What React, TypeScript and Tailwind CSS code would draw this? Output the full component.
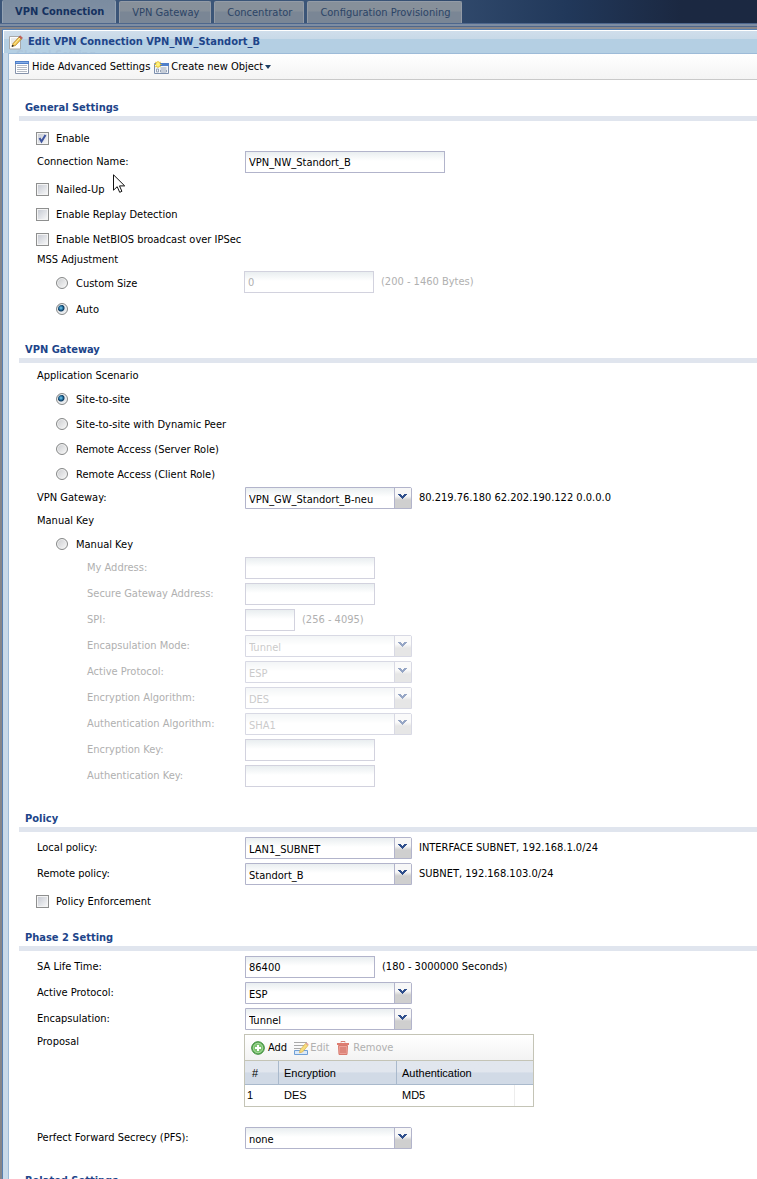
import { useId, type ReactNode } from "react";

const tabs = ["VPN Gateway", "Concentrator", "Configuration Provisioning"];

const scenarios = [
  "Site-to-site",
  "Site-to-site with Dynamic Peer",
  "Remote Access (Server Role)",
  "Remote Access (Client Role)",
];

function NoteIcon() {
  return (
    <svg width="14" height="15" viewBox="0 0 14 15" aria-hidden="true">
      <path d="M.5 1.500h11v12.500H.5z" fill="#fdfdfd" stroke="#a9a9a9" />
      <path d="M2 4h6M2 6h4M2 8h3" stroke="#d8d8d8" />
      <path d="M4 8.500L10 2l2.500 2-6 6.500L3 11.500z" fill="#f3c64b" stroke="#a97b2a" strokeWidth=".7" />
      <path d="M10 2l1-1.200 2.500 2L12.500 4z" fill="#d2605a" stroke="#9b4a42" strokeWidth=".5" />
      <path d="M5 9.500L11 3" stroke="#fff0a8" />
      <path d="M3 11.500l.5-1.500 1 1z" fill="#222" stroke="#222" strokeWidth=".6" />
    </svg>
  );
}

function ListIcon() {
  return (
    <svg width="14" height="13" viewBox="0 0 14 13" aria-hidden="true">
      <path d="M.5.5h13v12H.5z" fill="#fff" stroke="#8693ab" />
      <path d="M0 0h14v3H0z" fill="#4f7fca" />
      <path d="M1 1.500h12" stroke="#86aee6" />
      <path d="M2 4.500h10M2 6.500h10M2 8.500h10M2 10.500h10" stroke="#b4bac4" />
    </svg>
  );
}

function NewObjectIcon() {
  return (
    <svg width="15" height="13" viewBox="0 0 15 13" aria-hidden="true">
      <path d="M.5 2.500h14v10H.5z" fill="#f4f7fb" stroke="#7c8fae" />
      <path d="M6 2h9v3H6z" fill="#4f7fca" />
      <path d="M2.500 8h2v3h-2zM6.500 7h6M6.500 9h6v2h-6z" fill="none" stroke="#97a3b5" />
      <path d="M4 0v7M.5 3.500h7M1.500 1l5 5M6.500 1l-5 5" stroke="#e8c022" strokeWidth="1.200" />
      <circle cx="4" cy="3.500" r="2" fill="#fff27a" />
    </svg>
  );
}

function AddIcon() {
  return (
    <svg width="14" height="14" viewBox="0 0 14 14" aria-hidden="true">
      <circle cx="7" cy="7" r="6.300" fill="#58ab50" stroke="#3d8b3b" />
      <circle cx="7" cy="7" r="4.800" fill="#7cc46f" stroke="#b9e0b1" strokeWidth=".8" />
      <path d="M7 4v6M4 7h6" stroke="#fff" strokeWidth="2" />
    </svg>
  );
}

function EditIcon() {
  return (
    <svg width="15" height="14" viewBox="0 0 15 14" aria-hidden="true">
      <path d="M0 1.500h13M0 4.500h11M0 7.500h7" stroke="#a9a9a9" />
      <path d="M.5 9.500h13v4H.5z" fill="#dbe9f8" stroke="#6f9fd6" />
      <path d="M6 9l5.500-6.500 2.500 2L8.500 11l-3 .8z" fill="#f6dc7d" stroke="#d5ad4c" strokeWidth=".7" />
      <path d="M11.500 2.500l1-1 2.200 1.800-.7 1.200z" fill="#e6a39a" />
    </svg>
  );
}

function TrashIcon() {
  return (
    <svg width="12" height="14" viewBox="0 0 12 14" aria-hidden="true">
      <path d="M4 1.500V.5h4v1" fill="none" stroke="#d98276" />
      <path d="M0 2h12v2H0z" fill="#de7d71" />
      <path d="M1.500 4.500h9l-.5 9H2z" fill="#eda097" stroke="#d77a6e" />
      <path d="M4 6v6M6 6v6M8 6v6" stroke="#cd6d61" />
    </svg>
  );
}

function Pointer() {
  return (
    <svg width="13" height="20" viewBox="0 0 13 20" aria-hidden="true">
      <path
        d="M.5.8v15.400l3.700-3.500 2.500 5.600 2.200-1-2.400-5.400h5.200z"
        fill="#fff"
        stroke="#111"
        strokeWidth="1"
      />
    </svg>
  );
}

function Section({ title, children }: { title: string; children?: ReactNode }) {
  return (
    <section>
      <h2 className="border-b-[5px] border-[#e0e5ee] pt-0.5 pl-1.5 font-bold leading-4 text-[#204489]">
        {title}
      </h2>
      <div className="pt-[5px]">{children}</div>
    </section>
  );
}

function Caption({ children }: { children: ReactNode }) {
  return <p className="h-[19px] pl-[18px] leading-[15px]">{children}</p>;
}

function Check({ label, checked = false }: { label: string; checked?: boolean }) {
  return (
    <label className="flex h-[25px] items-center gap-[7px] pl-[17px]">
      <span className="grid size-[13px]">
        <input
          type="checkbox"
          defaultChecked={checked}
          className="peer col-start-1 row-start-1 size-[13px] appearance-none border border-[#8e8f8f] bg-linear-to-br from-[#c3c7d0] to-[#fbfbfb] shadow-[inset_0_0_0_1px_#f4f4f4]"
        />
        <svg
          viewBox="0 0 13 13"
          className="pointer-events-none invisible col-start-1 row-start-1 peer-checked:visible"
          aria-hidden="true"
        >
          <path d="M3.500 6l2 3.500 4-6.500" fill="none" stroke="#3f559f" strokeWidth="2" />
        </svg>
      </span>
      {label}
    </label>
  );
}

function Radio({ label, name, checked = false }: { label: string; name: string; checked?: boolean }) {
  return (
    <label className="flex h-[25px] items-center gap-2 pl-[37px]">
      <input
        type="radio"
        name={name}
        defaultChecked={checked}
        className="mb-px size-3 appearance-none rounded-full border border-[#868888] bg-linear-to-br from-[#c9cbce] to-[#fafafa] shadow-[inset_0_0_0_1px_#f1f1f1] checked:bg-[radial-gradient(circle_at_4px_4px,#7fd0f0_0,#1c6a9c_2px,#123a5c_3px,#e6eaee_4px)]"
      />
      {label}
    </label>
  );
}

type FieldProps = {
  label: string;
  value?: string;
  hint?: string;
  disabled?: boolean;
};

const inputClass =
  "h-[22px] border border-[#b2b4cb] bg-white bg-linear-to-b from-[#e9eef0] to-white to-[9px] px-[3px] pt-px disabled:border-[#d2d2de] disabled:text-[#b0b0b0]";

function TextField({ label, value = "", hint, disabled, width = "w-[130px]" }: FieldProps & { width?: string }) {
  const id = useId();
  return (
    <div className={`flex h-[26px] items-start leading-[22px] ${disabled ? "text-[#b0b0b0]" : ""}`}>
      <label htmlFor={id} className={`w-[226px] shrink-0 ${disabled ? "pl-[68px]" : "pl-[18px]"}`}>
        {label}
      </label>
      <input id={id} type="text" defaultValue={value} disabled={disabled} className={`${inputClass} ${width}`} />
      {hint && <span className="pl-[7px]">{hint}</span>}
    </div>
  );
}

function Combo({ label, value, hint, disabled }: FieldProps) {
  const id = useId();
  return (
    <div className={`flex h-[26px] items-start leading-[22px] ${disabled ? "text-[#b0b0b0]" : ""}`}>
      <label htmlFor={id} className={`w-[226px] shrink-0 ${disabled ? "pl-[68px]" : "pl-[18px]"}`}>
        {label}
      </label>
      <span className={`relative h-[22px] w-[167px] shrink-0 ${disabled ? "text-[#979797] opacity-50" : ""}`}>
        <select
          id={id}
          disabled={disabled}
          className="h-[22px] w-full appearance-none rounded-tr-xs border border-[#b2b4cb] bg-white bg-linear-to-b from-[#e9eef0] to-white to-[9px] pl-[3px] pt-px opacity-100"
        >
          <option>{value}</option>
        </select>
        <span className="pointer-events-none absolute inset-y-px right-px flex w-[17px] border-l border-[#b2b4cb] bg-linear-to-b from-[#f7f7f7] from-40% to-[#cfcfcf] to-60% pt-[6px] pl-[3px]">
          <svg width="9" height="6" viewBox="0 0 9 6" shapeRendering="crispEdges" aria-hidden="true">
            <path
              d="M0 0h3v1H0zM6 0h3v1H6zM1 1h3v1H1zM5 1h3v1H5zM2 2h5v1H2zM3 3h3v1H3zM4 4h1v1H4z"
              fill="#2f4f8c"
            />
          </svg>
        </span>
      </span>
      {hint && <span className="pl-[7px]">{hint}</span>}
    </div>
  );
}

function ProposalGrid() {
  return (
    <div className="w-[290px] border border-[#c4c4b6] bg-white">
      <div className="flex h-[26px] items-center border-b border-[#c4c4b6] bg-linear-to-b from-white to-[#f3f3f3] pt-px pl-1.5 text-[#b0b0b0]">
        <button type="button" className="flex items-center gap-[3px] text-black">
          <AddIcon />
          Add
        </button>
        <button type="button" disabled className="ml-[7px] flex items-center gap-px">
          <EditIcon />
          Edit
        </button>
        <button type="button" disabled className="ml-2 flex items-center gap-1">
          <TrashIcon />
          Remove
        </button>
      </div>
      <table className="w-full table-fixed border-separate border-spacing-0 text-left font-['Liberation_Sans',sans-serif]">
        <colgroup>
          <col className="w-[34px]" />
          <col className="w-[118px]" />
          <col className="w-[118px]" />
          <col />
        </colgroup>
        <thead>
          <tr className="h-6 bg-linear-to-b from-[#e1e6ee] from-45% to-[#d1dae6] to-50% *:border-b *:border-[#a9b9cc] *:font-normal">
            <th className="border-r pl-[7px]">#</th>
            <th className="border-r pl-[5px]">Encryption</th>
            <th className="pl-[5px]">Authentication</th>
            <th aria-hidden="true" />
          </tr>
        </thead>
        <tbody>
          <tr className="h-[21px] *:pb-0.5">
            <td className="pl-0.5">1</td>
            <td className="pl-[5px]">DES</td>
            <td className="border-r border-[#ededed] pl-[5px]">MD5</td>
            <td />
          </tr>
        </tbody>
      </table>
    </div>
  );
}

export default function App() {
  const customSize = useId();

  return (
    <div className="flex h-screen flex-col overflow-hidden bg-[#858589] font-['DejaVu_Sans_Condensed','DejaVu_Sans',sans-serif] text-[11px] leading-4 text-black">
      <nav className="flex h-[23px] shrink-0 items-stretch gap-[3px] bg-linear-to-r from-[#3b5578] from-50% via-[#21385a] via-75% to-[#1b2841] to-90% pl-0.5">
        <button
          type="button"
          className="rounded-t-xs border-x border-[#93a2b3] bg-linear-to-b from-[#7b8ca0] to-[#8291a4] pr-[11px] pl-3 font-bold text-[#15315f]"
        >
          VPN Connection
        </button>
        {tabs.map((tab) => (
          <button
            key={tab}
            type="button"
            className="mt-px rounded-t-xs border border-b-0 border-[#939ba6] bg-linear-to-b from-[#87909a] from-40% to-[#7a8695] to-50% pr-[11px] pl-3 text-[#2c4466]"
          >
            {tab}
          </button>
        ))}
      </nav>
      <div className="h-1 shrink-0 border-y border-[#4e678d] bg-[#7e8da2]" />

      <div className="mt-0.5 ml-0.5 flex min-h-0 flex-1 flex-col border-t border-l border-[#5780b2] bg-[#c9dae9]">
        <header className="relative flex h-[23px] shrink-0 items-center gap-[5px] border-t border-l border-white bg-linear-to-b from-[#d0deeb] from-0% via-[#c8d9e8] via-35% to-[#b4cfe3] to-36% pl-[5px]">
          <span
            className="absolute top-[16px] left-3 h-1.5 overflow-hidden font-bold leading-4 text-[#a9c0d6]/60"
            aria-hidden="true"
          >
            Global Setting
          </span>
          <NoteIcon />
          <h1 className="relative font-bold text-[#204489]">Edit VPN Connection VPN_NW_Standort_B</h1>
        </header>

        <div className="ml-[5px] flex min-h-0 flex-1 flex-col overflow-hidden border-t border-l border-[#9dbbd8] bg-white">
          <div className="flex h-[26px] shrink-0 items-center gap-1 border-b border-[#c9c9c9] bg-linear-to-b from-white to-[#f4f4f4] pt-px pl-1.5">
            <button type="button" className="flex items-center gap-[3px]">
              <ListIcon />
              Hide Advanced Settings
            </button>
            <button type="button" className="flex items-center gap-0.5">
              <NewObjectIcon />
              Create new Object
              <svg width="6" height="4" viewBox="0 0 6 4" aria-hidden="true">
                <path d="M0 0h6L3 4z" fill="#1c3e63" />
              </svg>
            </button>
          </div>

          <form className="flex flex-col gap-[18px] pt-[18px] pl-[10px]">
            <Section title="General Settings">
              <Check label="Enable" checked />
              <div className="relative">
                <TextField label="Connection Name:" value="VPN_NW_Standort_B" width="w-[200px]" />
                <span className="pointer-events-none absolute top-[23px] left-[94px] z-10">
                  <Pointer />
                </span>
              </div>
              <Check label="Nailed-Up" />
              <Check label="Enable Replay Detection" />
              <Check label="Enable NetBIOS broadcast over IPSec" />
              <Caption>MSS Adjustment</Caption>
              <div className="flex h-[26px] items-start">
                <div className="w-[225px] shrink-0">
                  <Radio label="Custom Size" name="mss" />
                </div>
                <input
                  id={customSize}
                  type="text"
                  aria-label="Custom Size"
                  defaultValue="0"
                  disabled
                  className={`${inputClass} w-[130px]`}
                />
                <label htmlFor={customSize} className="pl-[7px] leading-[22px] text-[#b0b0b0]">
                  (200 - 1460 Bytes)
                </label>
              </div>
              <Radio label="Auto" name="mss" checked />
            </Section>

            <Section title="VPN Gateway">
              <Caption>Application Scenario</Caption>
              {scenarios.map((scenario, index) => (
                <Radio key={scenario} label={scenario} name="scenario" checked={index === 0} />
              ))}
              <Combo
                label="VPN Gateway:"
                value="VPN_GW_Standort_B-neu"
                hint="80.219.76.180 62.202.190.122 0.0.0.0"
              />
              <Caption>Manual Key</Caption>
              <Radio label="Manual Key" name="scenario" />
              <TextField label="My Address:" disabled />
              <TextField label="Secure Gateway Address:" disabled />
              <TextField label="SPI:" hint="(256 - 4095)" width="w-[50px]" disabled />
              <Combo label="Encapsulation Mode:" value="Tunnel" disabled />
              <Combo label="Active Protocol:" value="ESP" disabled />
              <Combo label="Encryption Algorithm:" value="DES" disabled />
              <Combo label="Authentication Algorithm:" value="SHA1" disabled />
              <TextField label="Encryption Key:" disabled />
              <TextField label="Authentication Key:" disabled />
            </Section>

            <div className="flex flex-col gap-[14px]">
              <Section title="Policy">
                <Combo label="Local policy:" value="LAN1_SUBNET" hint="INTERFACE SUBNET, 192.168.1.0/24" />
                <Combo label="Remote policy:" value="Standort_B" hint="SUBNET, 192.168.103.0/24" />
                <Check label="Policy Enforcement" />
              </Section>

              <Section title="Phase 2 Setting">
                <TextField label="SA Life Time:" value="86400" hint="(180 - 3000000 Seconds)" />
                <Combo label="Active Protocol:" value="ESP" />
                <Combo label="Encapsulation:" value="Tunnel" />
                <div className="flex items-start pb-5">
                  <span className="w-[225px] shrink-0 pl-[18px] leading-[15px]">Proposal</span>
                  <ProposalGrid />
                </div>
                <Combo label="Perfect Forward Secrecy (PFS):" value="none" />
              </Section>
            </div>

            <Section title="Related Settings" />
          </form>
        </div>
      </div>
    </div>
  );
}
